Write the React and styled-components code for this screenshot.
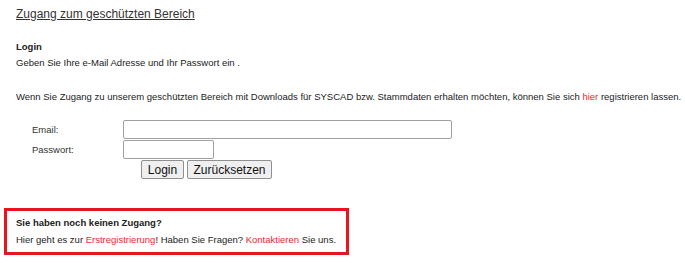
import styled, { createGlobalStyle } from 'styled-components'

const Global = createGlobalStyle`
  body {
    margin: 0;
    background: #fff;
    font-family: "Liberation Sans", Arial, sans-serif;
    color: #222;
  }
`

const Page = styled.div`
  width: 685px;
  height: 263px;
  padding: 6px 0 0 0;
  box-sizing: border-box;
  overflow: hidden;
`

const Inner = styled.div`
  padding-left: 16px;
`

const Title = styled.h1`
  margin: 0;
  font-size: 12px;
  font-weight: normal;
  color: #333;
  text-decoration: underline;
  line-height: 16px;
`

const Heading = styled.div`
  margin-top: 18px;
  font-size: 9.5px;
  font-weight: bold;
  line-height: 14px;
`

const Text = styled.p`
  margin: ${(p) => p.$top || 0}px 0 0 0;
  font-size: 9.5px;
  line-height: 14px;
  white-space: nowrap;
`

const Red = styled.span`
  color: #f0282d;
`

const Form = styled.div`
  margin-top: 16px;
  display: grid;
  grid-template-columns: 91px auto;
  row-gap: 1px;
  padding-left: 32px;
  align-items: center;
`

const Label = styled.label`
  font-size: 9.5px;
  color: #333;
`

const Input = styled.div`
  width: ${(p) => p.$w}px;
  height: ${(p) => p.$h || 19}px;
  box-sizing: border-box;
  border: 1px solid #a0a0a0;
  border-radius: 2px;
  background: #fff;
`

const Buttons = styled.div`
  grid-column: 2;
  display: flex;
  gap: 3px;
  margin-left: 18px;
`

const Button = styled.button`
  height: 19px;
  width: ${(p) => p.$w}px;
  padding: 0;
  font-family: "Liberation Sans", Arial, sans-serif;
  font-size: 12px;
  color: #111;
  background: #efefef;
  border: 1px solid #8f8f8f;
  border-radius: 2px;
`

const Notice = styled.div`
  margin: 29px 0 0 4px;
  width: 345px;
  height: 47px;
  box-sizing: border-box;
  border: 3px solid #e8141e;
  padding: 5px 0 0 9px;
`

const NoticeHead = styled.div`
  font-size: 9.5px;
  font-weight: bold;
  line-height: 14px;
`

const NoticeText = styled.div`
  margin-top: 3px;
  font-size: 9.5px;
  line-height: 14px;
  white-space: nowrap;
`

export default function App() {
  return (
    <Page>
      <Global />
      <Inner>
        <Title>Zugang zum geschützten Bereich</Title>
        <Heading>Login</Heading>
        <Text $top={2}>Geben Sie Ihre e-Mail Adresse und Ihr Passwort ein .</Text>
        <Text $top={20}>
          Wenn Sie Zugang zu unserem geschützten Bereich mit Downloads für SYSCAD bzw. Stammdaten erhalten möchten, können Sie sich <Red>hier</Red> registrieren lassen.
        </Text>
      </Inner>
      <Form>
        <Label>Email:</Label>
        <Input $w={329} $h={19} />
        <Label>Passwort:</Label>
        <Input $w={91} $h={19} />
        <Buttons>
          <Button $w={43}>Login</Button>
          <Button $w={85}>Zurücksetzen</Button>
        </Buttons>
      </Form>
      <Notice>
        <NoticeHead>Sie haben noch keinen Zugang?</NoticeHead>
        <NoticeText>
          Hier geht es zur <Red>Erstregistrierung</Red>! Haben Sie Fragen? <Red>Kontaktieren</Red> Sie uns.
        </NoticeText>
      </Notice>
    </Page>
  )
}
